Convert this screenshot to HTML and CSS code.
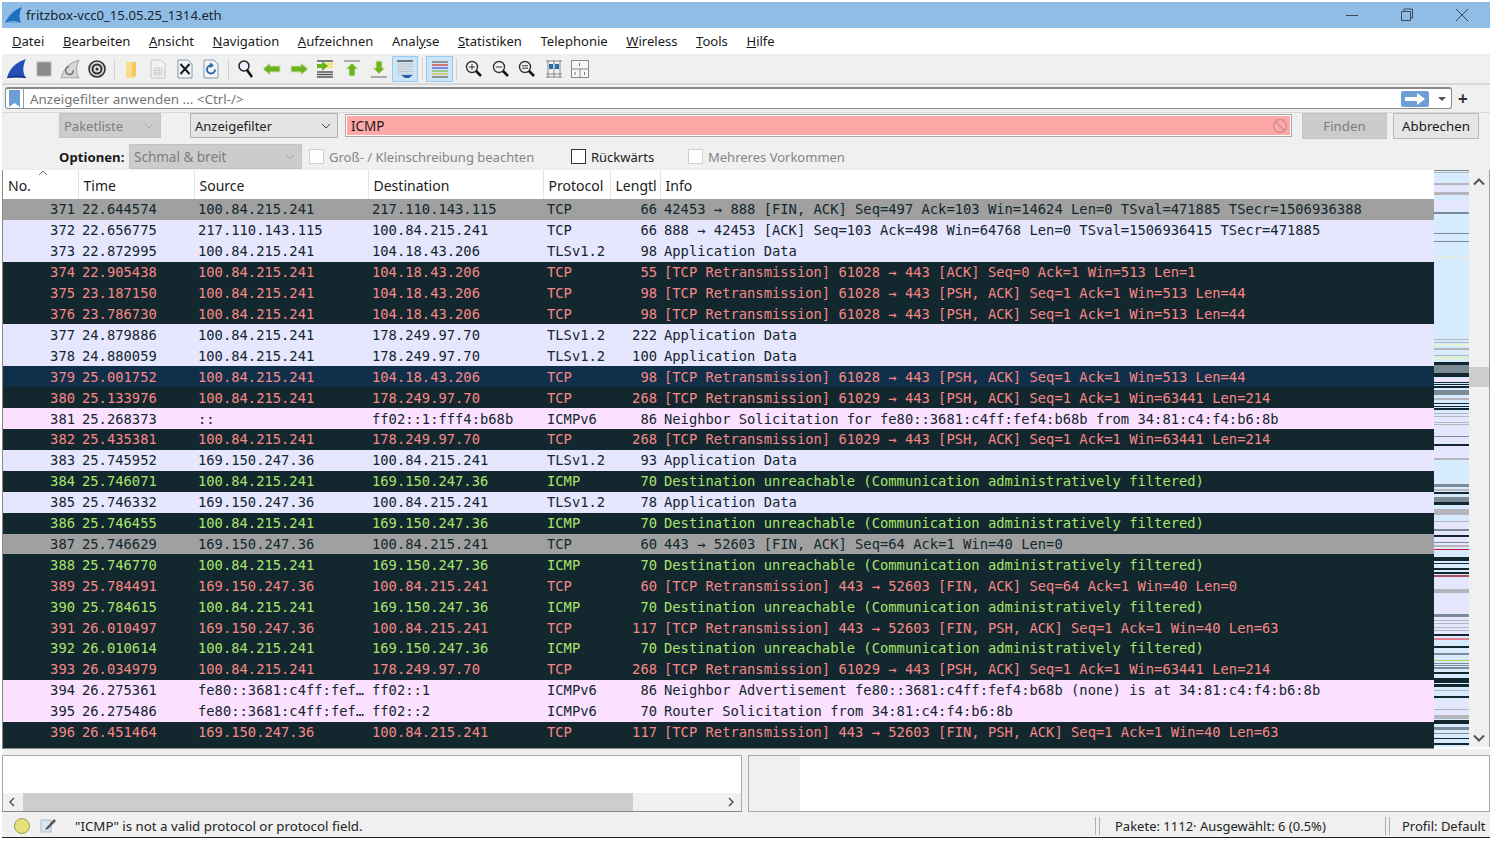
FILE: index.html
```html
<!DOCTYPE html>
<html>
<head>
  <meta charset="utf-8">
  <title>fritzbox-vcc0_15.05.25_1314.eth</title>
  <link rel="stylesheet" href="styles.css">
</head>
<body>
<div class="window">

  <!-- title bar -->
  <div class="titlebar">
    <svg class="app-icon" width="20" height="18" viewBox="0 0 20 18"><path d="M1 17C4 10 10 4 18 1C15 7 15 12 17 17Z" fill="#1f6fbf"/><path d="M1 17C6 14 12 14 17 17Z" fill="#6ea3d6"/></svg>
    <span class="title-text">fritzbox-vcc0_15.05.25_1314.eth</span>
    <div class="win-btns">
      <svg width="14" height="14" viewBox="0 0 14 14"><path d="M1 7.5H13" stroke="#3a4a58" fill="none"/></svg>
      <svg width="14" height="14" viewBox="0 0 14 14"><path d="M1.5 3.5H10.5V12.5H1.5ZM4 3.5V1H12.5V10H10.5" stroke="#3a4a58" fill="none"/></svg>
      <svg width="14" height="14" viewBox="0 0 14 14"><path d="M1 1L13 13M13 1L1 13" stroke="#3a4a58" fill="none"/></svg>
    </div>
  </div>

  <!-- menu -->
  <div class="menubar">
    <span><u>D</u>atei</span>
    <span><u>B</u>earbeiten</span>
    <span><u>A</u>nsicht</span>
    <span><u>N</u>avigation</span>
    <span><u>A</u>ufzeichnen</span>
    <span>Anal<u>y</u>se</span>
    <span><u>S</u>tatistiken</span>
    <span>Telephonie</span>
    <span><u>W</u>ireless</span>
    <span><u>T</u>ools</span>
    <span><u>H</u>ilfe</span>
  </div>

  <!-- main toolbar -->
  <div class="toolbar">
    <div class="tool"><svg width="22" height="22" viewBox="0 0 20 20"><path d="M1 18C3 10 9 4 18 1C15 8 15 13 18 18Z" fill="#2550b8"/><path d="M1 18C7 16 13 16 18 18" stroke="#15307a" fill="none"/></svg></div>
    <div class="tool"><svg width="20" height="20" viewBox="0 0 20 20"><rect x="3" y="3" width="14" height="14" fill="#8a8a8a" stroke="#b5b5b5"/></svg></div>
    <div class="tool"><svg width="22" height="22" viewBox="0 0 20 20"><path d="M2 18C4 10 10 4 18 2C15 8 15 13 18 18Z" fill="#d8d8d8" stroke="#aaa"/><path d="M13 11A3.500 3.500 0 1 1 9 8" stroke="#777" stroke-width="1.500" fill="none"/></svg></div>
    <div class="tool"><svg width="20" height="20" viewBox="0 0 20 20"><circle cx="10" cy="10" r="8" fill="#ddd" stroke="#333" stroke-width="1.600"/><circle cx="10" cy="10" r="4.500" fill="none" stroke="#333" stroke-width="2"/><circle cx="10" cy="10" r="1.500" fill="#333"/></svg></div>
    <div class="tool-sep"></div>
    <div class="tool"><svg width="20" height="20" viewBox="0 0 20 20"><path d="M5 3H15V17L11 19H5Z" fill="#fbdd92"/><path d="M11 3H15V17L11 19Z" fill="#f4c95c"/></svg></div>
    <div class="tool"><svg width="20" height="20" viewBox="0 0 20 20"><path d="M3 1H13L17 5V19H3Z" fill="#f2f2f2" stroke="#c4c4c4"/><path d="M6 9H14V16H6ZM6 11.500H14M6 14H14M8.700 9V16M11.300 9V16" stroke="#cfcfcf" fill="none"/></svg></div>
    <div class="tool"><svg width="20" height="20" viewBox="0 0 20 20"><path d="M3 1H13L17 5V19H3Z" fill="#f4f4f4" stroke="#7f9ab0"/><path d="M5.500 5L14.500 15M14.500 5L5.500 15" stroke="#1c1c1c" stroke-width="2"/></svg></div>
    <div class="tool"><svg width="20" height="20" viewBox="0 0 20 20"><path d="M3 1H13L17 5V19H3Z" fill="#f4f4f4" stroke="#7f9ab0"/><path d="M14 10.500A4 4 0 1 1 10 6.500" stroke="#2a6ab0" stroke-width="2" fill="none"/><path d="M9 3.500L13 6.500L9 9Z" fill="#2a6ab0"/></svg></div>
    <div class="tool-sep"></div>
    <div class="tool"><svg width="20" height="20" viewBox="0 0 20 20"><circle cx="8" cy="7" r="5" fill="#eef" stroke="#222" stroke-width="1.500"/><path d="M11 11L16 18" stroke="#111" stroke-width="2.500"/></svg></div>
    <div class="tool"><svg width="20" height="20" viewBox="0 0 20 20"><path d="M1 10L8 4V7H18V13H8V16Z" fill="#6cb31f" stroke="#cfe3b4"/></svg></div>
    <div class="tool"><svg width="20" height="20" viewBox="0 0 20 20"><path d="M19 10L12 4V7H2V13H12V16Z" fill="#6cb31f" stroke="#cfe3b4"/></svg></div>
    <div class="tool"><svg width="20" height="20" viewBox="0 0 20 20"><path d="M2 2H18M2 13H18M2 15.500H18M2 18H18" stroke="#555" stroke-width="1.300"/><path d="M11 5H18M12 8H18" stroke="#f2e46a" stroke-width="2.500"/><path d="M13 7L7 2V5H2V9H7V12Z" fill="#6cb31f"/></svg></div>
    <div class="tool"><svg width="20" height="20" viewBox="0 0 20 20"><path d="M2 2H18" stroke="#aaa" stroke-width="2"/><path d="M10 4L16 10H13V17H7V10H4Z" fill="#6cb31f" stroke="#cfe3b4"/></svg></div>
    <div class="tool"><svg width="20" height="20" viewBox="0 0 20 20"><path d="M2 18H18" stroke="#aaa" stroke-width="2"/><path d="M10 15L4 9H7V2H13V9H16Z" fill="#6cb31f" stroke="#cfe3b4"/></svg></div>
    <div class="tool on"><svg width="20" height="20" viewBox="0 0 20 20"><path d="M2 2H18" stroke="#555" stroke-width="1.500"/><path d="M2 5H18M2 7.500H18M2 10H18M2 12.500H18M2 15H18" stroke="#c4c4c4"/><path d="M6 16H18L14 19H10Z" fill="#2a5ea8"/></svg></div>
    <div class="tool-sep"></div>
    <div class="tool on"><svg width="20" height="20" viewBox="0 0 20 20"><path d="M2 3H18" stroke="#777" stroke-width="1.500"/><path d="M2 6H18" stroke="#d05050" stroke-width="1.500"/><path d="M2 9H18" stroke="#6a6ad0" stroke-width="1.500"/><path d="M2 12H18" stroke="#8ac060" stroke-width="1.500"/><path d="M2 15H18" stroke="#e0c050" stroke-width="1.500"/><path d="M2 18H18" stroke="#777" stroke-width="1.500"/></svg></div>
    <div class="tool-sep"></div>
    <div class="tool"><svg width="20" height="20" viewBox="0 0 20 20"><circle cx="8" cy="8" r="5.500" fill="#f4f4f4" stroke="#333" stroke-width="1.400"/><path d="M5 8H11M8 5V11" stroke="#333"/><path d="M12 12L17 17" stroke="#111" stroke-width="2.500"/></svg></div>
    <div class="tool"><svg width="20" height="20" viewBox="0 0 20 20"><circle cx="8" cy="8" r="5.500" fill="#f4f4f4" stroke="#333" stroke-width="1.400"/><path d="M5 8H11" stroke="#333"/><path d="M12 12L17 17" stroke="#111" stroke-width="2.500"/></svg></div>
    <div class="tool"><svg width="20" height="20" viewBox="0 0 20 20"><circle cx="8" cy="8" r="5.500" fill="#f4f4f4" stroke="#333" stroke-width="1.400"/><path d="M5 6.800H11M5 9.200H11" stroke="#333"/><path d="M12 12L17 17" stroke="#111" stroke-width="2.500"/></svg></div>
    <div class="tool"><svg width="20" height="20" viewBox="0 0 20 20"><path d="M2 2H18M2 18H18M2 15H18M4 1V19M10 1V19M16 1V19" stroke="#8a8a8a"/><path d="M5 5H9V10H5ZM11 5H15V10H11Z" fill="#2a6ab0"/></svg></div>
    <div class="tool"><svg width="20" height="20" viewBox="0 0 20 20"><rect x="1.500" y="1.500" width="17" height="17" fill="#f6f6f6" stroke="#888"/><path d="M1.500 10H18.500M10 10V18.500" stroke="#888"/><path d="M9.500 4V7M5 13V16M14.500 13V16" stroke="#777"/></svg></div>
  </div>

  <!-- display filter -->
  <div class="filterbar">
    <div class="filter-box">
      <div class="bookmark"><svg width="11" height="17" viewBox="0 0 11 17"><path d="M0 0H11V17L5.500 13L0 17Z" fill="#6d9fd4"/></svg></div>
      <span class="filter-hint">Anzeigefilter anwenden ... &lt;Ctrl-/&gt;</span>
      <div class="apply"><svg width="20" height="12" viewBox="0 0 20 12"><path d="M0 4H12V0L20 6L12 12V8H0Z" fill="#fff"/></svg></div>
      <span class="drop"></span>
    </div>
    <span class="plus">+</span>
  </div>

  <!-- find bar -->
  <div class="findbar">
    <div class="combo off w-list">Paketliste<svg width="10" height="6" viewBox="0 0 10 6"><path d="M1 1L5 5L9 1" stroke="#aaa" fill="none"/></svg></div>
    <div class="combo w-type">Anzeigefilter<svg width="10" height="6" viewBox="0 0 10 6"><path d="M1 1L5 5L9 1" stroke="#444" fill="none"/></svg></div>
    <div class="find-input">ICMP
      <svg width="16" height="16" viewBox="0 0 16 16"><circle cx="8" cy="8" r="6.500" fill="none" stroke="#c98b8b" stroke-width="1.300"/><path d="M3.500 3.500L12.500 12.500" stroke="#c98b8b" stroke-width="1.300"/></svg>
    </div>
    <div class="btn off">Finden</div>
    <div class="btn">Abbrechen</div>
  </div>

  <div class="optionsbar">
    <b class="opt-label">Optionen:</b>
    <div class="combo off w-mode">Schmal &amp; breit<svg width="10" height="6" viewBox="0 0 10 6"><path d="M1 1L5 5L9 1" stroke="#aaa" fill="none"/></svg></div>
    <label class="check off c1"><i></i>Groß- / Kleinschreibung beachten</label>
    <label class="check c2"><i></i>Rückwärts</label>
    <label class="check off"><i></i>Mehreres Vorkommen</label>
  </div>

  <!-- packet list -->
  <div class="packets">
    <div class="list">
      <table>
        <colgroup>
          <col class="c-no"><col class="c-time"><col class="c-src"><col class="c-dst"><col class="c-proto"><col class="c-len"><col>
        </colgroup>
        <thead>
          <tr>
            <th class="no-head">No.<svg class="sort" width="10" height="6" viewBox="0 0 10 6"><path d="M1 5L5 1L9 5" stroke="#777" fill="none"/></svg></th>
            <th>Time</th><th>Source</th><th>Destination</th><th>Protocol</th><th class="len-head">Lengtl</th><th>Info</th>
          </tr>
        </thead>
        <tbody>
          <tr class="gray"><td>371</td><td>22.644574</td><td>100.84.215.241</td><td>217.110.143.115</td><td>TCP</td><td>66</td><td>42453 → 888 [FIN, ACK] Seq=497 Ack=103 Win=14624 Len=0 TSval=471885 TSecr=1506936388</td></tr>
          <tr class="tcp"><td>372</td><td>22.656775</td><td>217.110.143.115</td><td>100.84.215.241</td><td>TCP</td><td>66</td><td>888 → 42453 [ACK] Seq=103 Ack=498 Win=64768 Len=0 TSval=1506936415 TSecr=471885</td></tr>
          <tr class="tcp"><td>373</td><td>22.872995</td><td>100.84.215.241</td><td>104.18.43.206</td><td>TLSv1.2</td><td>98</td><td>Application Data</td></tr>
          <tr class="bad"><td>374</td><td>22.905438</td><td>100.84.215.241</td><td>104.18.43.206</td><td>TCP</td><td>55</td><td>[TCP Retransmission] 61028 → 443 [ACK] Seq=0 Ack=1 Win=513 Len=1</td></tr>
          <tr class="bad"><td>375</td><td>23.187150</td><td>100.84.215.241</td><td>104.18.43.206</td><td>TCP</td><td>98</td><td>[TCP Retransmission] 61028 → 443 [PSH, ACK] Seq=1 Ack=1 Win=513 Len=44</td></tr>
          <tr class="bad"><td>376</td><td>23.786730</td><td>100.84.215.241</td><td>104.18.43.206</td><td>TCP</td><td>98</td><td>[TCP Retransmission] 61028 → 443 [PSH, ACK] Seq=1 Ack=1 Win=513 Len=44</td></tr>
          <tr class="tcp"><td>377</td><td>24.879886</td><td>100.84.215.241</td><td>178.249.97.70</td><td>TLSv1.2</td><td>222</td><td>Application Data</td></tr>
          <tr class="tcp"><td>378</td><td>24.880059</td><td>100.84.215.241</td><td>178.249.97.70</td><td>TLSv1.2</td><td>100</td><td>Application Data</td></tr>
          <tr class="bad sel"><td>379</td><td>25.001752</td><td>100.84.215.241</td><td>104.18.43.206</td><td>TCP</td><td>98</td><td>[TCP Retransmission] 61028 → 443 [PSH, ACK] Seq=1 Ack=1 Win=513 Len=44</td></tr>
          <tr class="bad"><td>380</td><td>25.133976</td><td>100.84.215.241</td><td>178.249.97.70</td><td>TCP</td><td>268</td><td>[TCP Retransmission] 61029 → 443 [PSH, ACK] Seq=1 Ack=1 Win=63441 Len=214</td></tr>
          <tr class="v6"><td>381</td><td>25.268373</td><td>::</td><td>ff02::1:fff4:b68b</td><td>ICMPv6</td><td>86</td><td>Neighbor Solicitation for fe80::3681:c4ff:fef4:b68b from 34:81:c4:f4:b6:8b</td></tr>
          <tr class="bad"><td>382</td><td>25.435381</td><td>100.84.215.241</td><td>178.249.97.70</td><td>TCP</td><td>268</td><td>[TCP Retransmission] 61029 → 443 [PSH, ACK] Seq=1 Ack=1 Win=63441 Len=214</td></tr>
          <tr class="tcp"><td>383</td><td>25.745952</td><td>169.150.247.36</td><td>100.84.215.241</td><td>TLSv1.2</td><td>93</td><td>Application Data</td></tr>
          <tr class="err"><td>384</td><td>25.746071</td><td>100.84.215.241</td><td>169.150.247.36</td><td>ICMP</td><td>70</td><td>Destination unreachable (Communication administratively filtered)</td></tr>
          <tr class="tcp"><td>385</td><td>25.746332</td><td>169.150.247.36</td><td>100.84.215.241</td><td>TLSv1.2</td><td>78</td><td>Application Data</td></tr>
          <tr class="err"><td>386</td><td>25.746455</td><td>100.84.215.241</td><td>169.150.247.36</td><td>ICMP</td><td>70</td><td>Destination unreachable (Communication administratively filtered)</td></tr>
          <tr class="gray"><td>387</td><td>25.746629</td><td>169.150.247.36</td><td>100.84.215.241</td><td>TCP</td><td>60</td><td>443 → 52603 [FIN, ACK] Seq=64 Ack=1 Win=40 Len=0</td></tr>
          <tr class="err"><td>388</td><td>25.746770</td><td>100.84.215.241</td><td>169.150.247.36</td><td>ICMP</td><td>70</td><td>Destination unreachable (Communication administratively filtered)</td></tr>
          <tr class="bad"><td>389</td><td>25.784491</td><td>169.150.247.36</td><td>100.84.215.241</td><td>TCP</td><td>60</td><td>[TCP Retransmission] 443 → 52603 [FIN, ACK] Seq=64 Ack=1 Win=40 Len=0</td></tr>
          <tr class="err"><td>390</td><td>25.784615</td><td>100.84.215.241</td><td>169.150.247.36</td><td>ICMP</td><td>70</td><td>Destination unreachable (Communication administratively filtered)</td></tr>
          <tr class="bad"><td>391</td><td>26.010497</td><td>169.150.247.36</td><td>100.84.215.241</td><td>TCP</td><td>117</td><td>[TCP Retransmission] 443 → 52603 [FIN, PSH, ACK] Seq=1 Ack=1 Win=40 Len=63</td></tr>
          <tr class="err"><td>392</td><td>26.010614</td><td>100.84.215.241</td><td>169.150.247.36</td><td>ICMP</td><td>70</td><td>Destination unreachable (Communication administratively filtered)</td></tr>
          <tr class="bad"><td>393</td><td>26.034979</td><td>100.84.215.241</td><td>178.249.97.70</td><td>TCP</td><td>268</td><td>[TCP Retransmission] 61029 → 443 [PSH, ACK] Seq=1 Ack=1 Win=63441 Len=214</td></tr>
          <tr class="v6"><td>394</td><td>26.275361</td><td>fe80::3681:c4ff:fef…</td><td>ff02::1</td><td>ICMPv6</td><td>86</td><td>Neighbor Advertisement fe80::3681:c4ff:fef4:b68b (none) is at 34:81:c4:f4:b6:8b</td></tr>
          <tr class="v6"><td>395</td><td>26.275486</td><td>fe80::3681:c4ff:fef…</td><td>ff02::2</td><td>ICMPv6</td><td>70</td><td>Router Solicitation from 34:81:c4:f4:b6:8b</td></tr>
          <tr class="bad"><td>396</td><td>26.451464</td><td>169.150.247.36</td><td>100.84.215.241</td><td>TCP</td><td>117</td><td>[TCP Retransmission] 443 → 52603 [FIN, PSH, ACK] Seq=1 Ack=1 Win=40 Len=63</td></tr>
          <tr class="err cut"><td>397</td><td>26.451590</td><td>100.84.215.241</td><td>169.150.247.36</td><td>ICMP</td><td>70</td><td>Destination unreachable (Communication administratively filtered)</td></tr>
        </tbody>
      </table>
    </div>

    <svg class="minimap" width="35" height="577" viewBox="0 170 35 577" preserveAspectRatio="none">
      <rect x="0" y="170" width="35" height="577" fill="#d7ebff"/>
      <g fill="#e7e6ff">
        <rect x="0" y="182" width="35" height="13"/><rect x="0" y="200" width="35" height="10"/><rect x="0" y="415" width="35" height="43"/><rect x="0" y="521" width="35" height="30"/><rect x="0" y="577" width="35" height="60"/><rect x="0" y="700" width="35" height="15"/>
      </g>
      <g fill="#12272e">
        <rect x="0" y="362" width="35" height="3"/><rect x="0" y="373" width="35" height="4"/><rect x="0" y="382" width="35" height="1"/><rect x="0" y="384" width="35" height="1"/><rect x="0" y="386" width="35" height="2"/><rect x="0" y="403" width="35" height="1"/><rect x="0" y="406" width="35" height="1"/><rect x="0" y="408" width="35" height="2"/>
        <rect x="0" y="444" width="35" height="2"/><rect x="0" y="492" width="35" height="2"/><rect x="0" y="502" width="35" height="3"/><rect x="0" y="535" width="35" height="2"/><rect x="0" y="557" width="35" height="4"/><rect x="0" y="563" width="35" height="1"/><rect x="0" y="568" width="35" height="2"/><rect x="0" y="572" width="35" height="2"/>
        <rect x="0" y="634" width="35" height="2"/><rect x="0" y="646" width="35" height="2"/><rect x="0" y="672" width="35" height="2"/><rect x="0" y="678" width="35" height="5"/><rect x="0" y="684" width="35" height="3"/><rect x="0" y="696" width="35" height="2"/><rect x="0" y="720" width="35" height="4"/><rect x="0" y="738" width="35" height="1"/><rect x="0" y="743" width="35" height="2"/>
      </g>
      <g fill="#7c8a96">
        <rect x="0" y="170" width="35" height="1"/><rect x="0" y="212" width="35" height="2"/><rect x="0" y="233" width="35" height="1"/><rect x="0" y="241" width="35" height="1"/><rect x="0" y="365" width="35" height="8"/><rect x="0" y="390" width="35" height="5"/><rect x="0" y="436" width="35" height="1"/><rect x="0" y="484" width="35" height="3"/>
        <rect x="0" y="497" width="35" height="5"/><rect x="0" y="529" width="35" height="2"/><rect x="0" y="542" width="35" height="1"/><rect x="0" y="614" width="35" height="3"/><rect x="0" y="653" width="35" height="2"/><rect x="0" y="663" width="35" height="1"/><rect x="0" y="665" width="35" height="1"/><rect x="0" y="667" width="35" height="2"/><rect x="0" y="727" width="35" height="3"/><rect x="0" y="733" width="35" height="1"/>
      </g>
      <g fill="#b4b6bc">
        <rect x="0" y="172" width="35" height="1"/><rect x="0" y="183" width="35" height="2"/><rect x="0" y="192" width="35" height="3"/><rect x="0" y="339" width="35" height="1"/><rect x="0" y="342" width="35" height="1"/><rect x="0" y="348" width="35" height="2"/><rect x="0" y="355" width="35" height="1"/><rect x="0" y="398" width="35" height="2"/><rect x="0" y="413" width="35" height="1"/><rect x="0" y="416" width="35" height="1"/><rect x="0" y="422" width="35" height="1"/><rect x="0" y="424" width="35" height="1"/><rect x="0" y="458" width="35" height="2"/>
        <rect x="0" y="489" width="35" height="2"/><rect x="0" y="509" width="35" height="6"/><rect x="0" y="521" width="35" height="1"/><rect x="0" y="545" width="35" height="2"/><rect x="0" y="589" width="35" height="4"/><rect x="0" y="620" width="35" height="1"/><rect x="0" y="623" width="35" height="1"/><rect x="0" y="627" width="35" height="1"/><rect x="0" y="630" width="35" height="1"/><rect x="0" y="690" width="35" height="1"/><rect x="0" y="709" width="35" height="1"/><rect x="0" y="715" width="35" height="4"/>
      </g>
      <rect x="0" y="257" width="35" height="1" fill="#f5e8c8"/>
      <rect x="0" y="344" width="35" height="2" fill="#e8f4d8"/>
      <rect x="0" y="357" width="35" height="2" fill="#e0f0c0"/>
      <rect x="0" y="379" width="35" height="2" fill="#fce0ff"/>
      <rect x="0" y="549" width="35" height="1" fill="#b02030"/>
      <rect x="0" y="575" width="35" height="2" fill="#a85060"/>
      <rect x="0" y="638" width="35" height="2" fill="#e08090"/>
      <rect x="0" y="660" width="35" height="1" fill="#b0d060"/>
    </svg>

    <div class="vscroll">
      <svg class="arrow" width="12" height="8" viewBox="0 0 12 8"><path d="M1 6.500L6 1.500L11 6.500" stroke="#555" stroke-width="2" fill="none"/></svg>
      <div class="vthumb"></div>
      <svg class="arrow bottom" width="12" height="8" viewBox="0 0 12 8"><path d="M1 1.500L6 6.500L11 1.500" stroke="#555" stroke-width="2" fill="none"/></svg>
    </div>
  </div>

  <!-- detail + bytes panes -->
  <div class="panes">
    <div class="pane-left">
      <div class="pane-body"></div>
      <div class="hscroll">
        <svg width="20" height="10" viewBox="0 0 20 10"><path d="M11 1L7 5L11 9" stroke="#444" stroke-width="1.300" fill="none"/></svg>
        <div class="hthumb"></div>
        <svg class="hright" width="8" height="10" viewBox="0 0 8 10"><path d="M2 1L6 5L2 9" stroke="#444" stroke-width="1.300" fill="none"/></svg>
      </div>
    </div>
    <div class="pane-right"><div class="offset-col"></div></div>
  </div>

  <!-- status bar -->
  <div class="statusbar">
    <span class="led"></span>
    <svg class="note" width="18" height="18" viewBox="0 0 18 18"><path d="M2 3H12V15H2Z" fill="#d8e6f2" stroke="#a8b8c8"/><path d="M7 11L15 2L17 4L9 12L6 13Z" fill="#555"/></svg>
    <span class="status-msg">"ICMP" is not a valid protocol or protocol field.</span>
    <span class="grip"></span>
    <span class="status-count">Pakete: 1112· Ausgewählt: 6 (0.5%)</span>
    <span class="grip"></span>
    <span class="status-profile">Profil: Default</span>
  </div>

</div>
</body>
</html>
```

FILE: styles.css
```css
html, body { margin: 0; padding: 0; background: #fff; }
body { font-family: "Noto Sans", "Open Sans", sans-serif; font-size: 14px; color: #1a1a1a; overflow: hidden; }

.window { margin: 2px 2px 0 2px; height: 836px; display: flex; flex-direction: column; border-bottom: 1px solid #222; box-sizing: border-box; background: #f0f0f0; }

.titlebar { height: 26px; background: #8fbde6; display: flex; align-items: center; color: #1a2530; flex: none; }
.app-icon { margin-left: 2px; }
.title-text { margin-left: 2px; font-size: 13.15px; }
.win-btns { margin-left: auto; display: flex; gap: 41px; padding-right: 21px; }

.menubar { height: 26px; padding-bottom: 1px; box-sizing: border-box; background: #fff; display: flex; align-items: center; padding-left: 10px; gap: 18.6px; flex: none; font-size: 13.05px; }

.toolbar { height: 29px; display: flex; align-items: center; padding-left: 2px; flex: none; border-bottom: 2px solid #d8d8d8; box-sizing: content-box; }
.tool { width: 26.6px; height: 26px; display: flex; align-items: center; justify-content: center; flex: none; box-sizing: border-box; }
.tool.on { background: #cce4f7; border: 1px solid #99c8ee; }
.tool-sep { width: 1px; height: 22px; background: #d4d4d4; margin: 0 3.4px; flex: none; }

.filterbar { height: 28px; padding-bottom: 1px; box-sizing: border-box; display: flex; align-items: center; padding-left: 3px; flex: none; border-bottom: 1px solid #d8d8d8; }
.filter-box { width: 1447px; height: 22px; background: #fff; border: 1px solid #8a8a8a; border-top-width: 2px; border-radius: 3px; display: flex; align-items: center; box-sizing: border-box; }
.bookmark { width: 18px; height: 100%; display: flex; align-items: center; justify-content: center; border-right: 1px solid #9a9a9a; flex: none; box-sizing: border-box; }
.filter-hint { margin-left: 6px; color: #757575; font-size: 13.4px; }
.apply { margin-left: auto; width: 28px; height: 16px; background: #6d9fd4; border-radius: 2px; display: flex; align-items: center; justify-content: center; }
.drop { width: 0; height: 0; border-left: 4px solid transparent; border-right: 4px solid transparent; border-top: 4px solid #555; margin: 0 5px 0 9px; }
.plus { margin-left: 6px; font-weight: bold; font-size: 17px; line-height: 1; color: #333; }

.findbar { height: 29px; padding-bottom: 4px; box-sizing: border-box; display: flex; align-items: center; padding-left: 57px; flex: none; }
.combo { height: 25px; display: flex; align-items: center; justify-content: space-between; padding: 0 6px 0 4px; box-sizing: border-box; background: #e5e5e5; border: 1px solid #b0b0b0; font-size: 13px; color: #222; flex: none; }
.combo.off { background: #cccccc; border-color: #c4c4c4; color: #7d7d7d; }
.w-list { width: 102px; margin-right: 29px; }
.w-type { width: 148px; margin-right: 7px; }
.w-mode { width: 173px; margin-right: 7px; font-size: 13.5px; }
.find-input { width: 947px; height: 23px; background: #ffa8a8; border: 1px solid #aaa; outline: 1px solid #fff; outline-offset: -2px; display: flex; align-items: center; justify-content: space-between; padding: 0 3px 0 5px; box-sizing: border-box; font-size: 13.5px; flex: none; }
.btn { width: 85px; height: 26px; margin-left: 10px; background: #e5e5e5; border: 1px solid #b8b8b8; display: flex; align-items: center; justify-content: center; box-sizing: border-box; font-size: 13.3px; flex: none; }
.btn + .btn { margin-left: 6px; width: 86px; }
.btn.off { background: #cccccc; border-color: #c4c4c4; color: #7d7d7d; }

.optionsbar { height: 28px; padding-top: 1px; box-sizing: border-box; display: flex; align-items: center; padding-left: 57px; flex: none; font-size: 13px; }
.opt-label { width: 70px; flex: none; font-weight: 700; font-size: 13.2px; }
.check { display: flex; align-items: center; flex: none; }
.check i { width: 13px; height: 13px; background: #fff; border: 1px solid #333; margin-right: 5px; display: block; flex: none; }
.check.off { color: #858585; }
.check.off i { border-color: #d0d0d0; }
.c1 { width: 262px; }
.c2 { width: 117px; }

.packets { height: 579px; display: flex; flex: none; background: #fff; }
.list { width: 1431px; height: 578px; border-left: 1px solid #8a8a8a; border-bottom: 1px solid #8a8a8a; overflow: hidden; flex: none; }
table { border-collapse: collapse; table-layout: fixed; width: 1431px; }
.c-no { width: 75px; }
.c-time { width: 116px; }
.c-src { width: 174px; }
.c-dst { width: 175px; }
.c-proto { width: 67px; }
.c-len { width: 50px; }
th { height: 29px; padding: 1px 0 0 5px; box-sizing: border-box; text-align: left; font-weight: normal; font-size: 14px; background: #fff; border-right: 1px solid #e4e4e4; overflow: hidden; white-space: nowrap; }
th:last-child { border-right: none; }
.no-head { position: relative; }
.sort { position: absolute; left: 35px; top: 0; }
tbody tr { height: 20.92px; }
td { height: 20.92px; padding: 0 0 0 4px; white-space: nowrap; overflow: hidden; font-family: "DejaVu Sans Mono", "Liberation Mono", monospace; font-size: 13.8px; line-height: 20px; box-sizing: border-box; }
td:first-child { text-align: right; padding: 0 3px 0 0; }
td:nth-child(6) { text-align: right; padding: 0 3px 0 0; }
tr.gray td { background: #a0a0a0; color: #12272e; }
tr.tcp td { background: #e7e6ff; color: #12272e; }
tr.v6 td { background: #fce0ff; color: #12272e; }
tr.bad td { background: #12272e; color: #f78787; }
tr.err td { background: #12272e; color: #a8e46c; }
tr.sel td { background: #10304a; }
tr.cut td { padding-top: 2px; vertical-align: top; }

.minimap { flex: none; display: block; }
.vscroll { width: 20px; display: flex; flex-direction: column; align-items: center; flex: none; border-right: 1px solid #a0a0a0; background: #f0f0f0; height: 577px; }
.arrow { margin-top: 8px; flex: none; }
.vthumb { width: 100%; height: 20px; background: #cdcdcd; margin-top: 181px; flex: none; }
.arrow.bottom { margin-top: auto; margin-bottom: 5px; }

.panes { height: 57px; margin-top: 6px; display: flex; justify-content: space-between; flex: none; }
.pane-left { width: 740px; background: #fff; border: 1px solid #a8a8a8; border-bottom-color: #888; box-sizing: border-box; display: flex; flex-direction: column; }
.pane-body { flex: 1; }
.hscroll { height: 18px; display: flex; align-items: center; background: #f0f0f0; flex: none; }
.hscroll svg { flex: none; }
.hthumb { width: 610px; height: 100%; background: #cdcdcd; }
.hright { margin-left: auto; margin-right: 6px; }
.pane-right { width: 742px; background: #fff; border: 1px solid #a8a8a8; box-sizing: border-box; }
.offset-col { width: 51px; height: 100%; background: #f0f0f0; }

.statusbar { flex: 1; display: flex; align-items: center; font-size: 13.3px; color: #222; padding: 2px 0 0 12px; }
.led { width: 14px; height: 14px; border-radius: 50%; background: #e4e07a; border: 1px solid #9c9a50; flex: none; }
.note { margin-left: 9px; flex: none; }
.status-msg { margin-left: 18px; width: 1020px; flex: none; }
.grip { width: 3px; height: 18px; border-left: 1px solid #b0b0b0; border-right: 1px solid #b0b0b0; flex: none; }
.status-count { margin-left: 15px; width: 270px; flex: none; font-size: 13px; }
.status-profile { margin-left: 12px; font-size: 13px; }
```
